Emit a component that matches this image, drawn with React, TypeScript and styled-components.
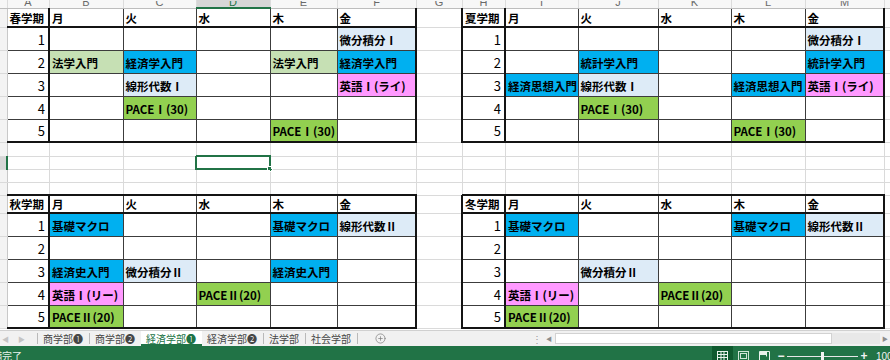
import React from "react"
import styled, { createGlobalStyle } from "styled-components"
import { CirclePlus } from "lucide-react"

const GlobalStyle = createGlobalStyle`
  html, body {
    margin: 0;
    padding: 0;
    background: #ffffff;
  }
  body {
    width: 890px;
    height: 360px;
    overflow: hidden;
    font-family: "Noto Sans CJK JP", "Noto Sans", sans-serif;
  }
`

const GREEN = "#217346"

type Fill = "blue" | "sky" | "leaf" | "lime" | "pink"
const FILL: Record<Fill, string> = {
  blue: "#00b0f0",
  sky: "#ddebf7",
  leaf: "#c6e0b4",
  lime: "#92d050",
  pink: "#ff99ff",
}

type Slot = [string, Fill] | null
interface Term {
  name: string
  slots: Slot[][]
}

const spring: Term = {
  name: "春学期",
  slots: [
    [null, null, null, null, ["微分積分Ⅰ", "sky"]],
    [["法学入門", "leaf"], ["経済学入門", "blue"], null, ["法学入門", "leaf"], ["経済学入門", "blue"]],
    [null, ["線形代数Ⅰ", "sky"], null, null, ["英語Ⅰ(ライ)", "pink"]],
    [null, ["PACEⅠ(30)", "lime"], null, null, null],
    [null, null, null, ["PACEⅠ(30)", "lime"], null],
  ],
}

const summer: Term = {
  name: "夏学期",
  slots: [
    [null, null, null, null, ["微分積分Ⅰ", "sky"]],
    [null, ["統計学入門", "blue"], null, null, ["統計学入門", "blue"]],
    [["経済思想入門", "blue"], ["線形代数Ⅰ", "sky"], null, ["経済思想入門", "blue"], ["英語Ⅰ(ライ)", "pink"]],
    [null, ["PACEⅠ(30)", "lime"], null, null, null],
    [null, null, null, ["PACEⅠ(30)", "lime"], null],
  ],
}

const autumn: Term = {
  name: "秋学期",
  slots: [
    [["基礎マクロ", "blue"], null, null, ["基礎マクロ", "blue"], ["線形代数Ⅱ", "sky"]],
    [null, null, null, null, null],
    [["経済史入門", "blue"], ["微分積分Ⅱ", "sky"], null, ["経済史入門", "blue"], null],
    [["英語Ⅰ(リー)", "pink"], null, ["PACEⅡ(20)", "lime"], null, null],
    [["PACEⅡ(20)", "lime"], null, null, null, null],
  ],
}

const winter: Term = {
  name: "冬学期",
  slots: [
    [["基礎マクロ", "blue"], null, null, ["基礎マクロ", "blue"], ["線形代数Ⅱ", "sky"]],
    [null, null, null, null, null],
    [null, ["微分積分Ⅱ", "sky"], null, null, null],
    [["英語Ⅰ(リー)", "pink"], null, ["PACEⅡ(20)", "lime"], null, null],
    [["PACEⅡ(20)", "lime"], null, null, null, null],
  ],
}

const COLS = [7, 42, 74, 73, 74, 67, 79, 46, 43, 73, 80, 73, 74, 79, 6]
const LETTERS = ["", "A", "B", "C", "D", "E", "F", "G", "H", "I", "J", "K", "L", "M", ""]
const DAYS = ["月", "火", "水", "木", "金"]
const SEL_COL = 4
const BLANK_HEIGHTS = [14, 13, 13, 13]

// 0 = sheet gridline, 1 = thin rule, 2 = thick rule
type Weight = 0 | 1 | 2
const line = (w: Weight) =>
  w === 2 ? "2px solid #141414" : w === 1 ? "1px solid #3c3c3c" : "1px solid #dadada"

const Page = styled.div`
  width: 890px;
  height: 360px;
  overflow: hidden;
  display: flex;
  flex-direction: column;
`

const Sheet = styled.table`
  width: 890px;
  border-collapse: collapse;
  table-layout: fixed;
  flex: none;
`

const Col = styled.col<{ $w: number }>`
  width: ${p => p.$w}px;
`

const Row = styled.tr<{ $h: number }>`
  height: ${p => p.$h}px;
`

const ColHead = styled.td<{ $sel?: boolean }>`
  padding: 0;
  height: 7px;
  background: ${p => (p.$sel ? "#d6d6d6" : "#f7f7f7")};
  border-right: 1px solid #dcdcdc;
  border-bottom: ${p => (p.$sel ? `2px solid ${GREEN}` : "1px solid #bdbdbd")};
  overflow: hidden;
`

const ColHeadInner = styled.div<{ $sel?: boolean }>`
  height: 6px;
  display: flex;
  align-items: flex-end;
  justify-content: center;
  overflow: hidden;
  font-family: "Liberation Sans", Arial, sans-serif;
  font-size: 11px;
  line-height: 9px;
  color: ${p => (p.$sel ? GREEN : "#6a6a6a")};
`

const RowHead = styled.td<{ $sel?: boolean }>`
  padding: 0;
  background: ${p => (p.$sel ? "#d6d6d6" : "#f3f3f3")};
  border-bottom: 1px solid #dadada;
  border-right: ${p => (p.$sel ? `2px solid ${GREEN}` : "1px solid #c8c8c8")};
`

const Cell = styled.td<{
  $t: Weight
  $r: Weight
  $b: Weight
  $l: Weight
  $fill?: string
  $kind: "head" | "num" | "text" | "blank"
  $sel?: boolean
}>`
  position: relative;
  border-top: ${p => line(p.$t)};
  border-right: ${p => line(p.$r)};
  border-bottom: ${p => line(p.$b)};
  border-left: ${p => line(p.$l)};
  background: ${p => p.$fill ?? "#ffffff"};
  padding: ${p =>
    p.$kind === "blank" ? "0" : p.$kind === "head" ? "0 2px 1px" : p.$kind === "num" ? "0 3px 3px 2px" : "0 2px 3px"};
  vertical-align: bottom;
  text-align: ${p => (p.$kind === "num" ? "right" : "left")};
  font-size: ${p => (p.$kind === "num" ? "13px" : "11.5px")};
  font-weight: ${p => (p.$kind === "num" ? 400 : 700)};
  line-height: 14px;
  color: #000000;
  white-space: nowrap;
  overflow: hidden;

  ${p =>
    p.$sel &&
    `
    border: 2px solid ${GREEN};
    overflow: visible;
    &::after {
      content: "";
      position: absolute;
      right: -4px;
      bottom: -4px;
      width: 4px;
      height: 4px;
      background: ${GREEN};
      border: 1px solid #ffffff;
    }
  `}
`

const BlankCell = () => <Cell $t={0} $r={0} $b={0} $l={0} $kind="blank" />

function termCells(term: Term, r: number, left: boolean, headTop: Weight) {
  const cells: React.ReactNode[] = []
  for (let k = 0; k < 6; k++) {
    const t: Weight = r === 0 ? headTop : 1
    const b: Weight = r === 0 || r === 5 ? 2 : 1
    const l: Weight = k === 0 ? (left ? 0 : 2) : k === 1 ? 2 : 1
    const rr: Weight = k === 0 || k === 5 ? 2 : 1
    let text = ""
    let fill: string | undefined
    let kind: "head" | "num" | "text" = "text"
    if (r === 0) {
      text = k === 0 ? term.name : DAYS[k - 1]
      kind = "head"
    } else if (k === 0) {
      text = String(r)
      kind = "num"
    } else {
      const s = term.slots[r - 1][k - 1]
      if (s) {
        text = s[0]
        fill = FILL[s[1]]
      }
    }
    cells.push(
      <Cell key={`${term.name}-${k}`} $t={t} $r={rr} $b={b} $l={l} $fill={fill} $kind={kind}>
        {text}
      </Cell>
    )
  }
  return cells
}

function TermRows({ left, right, headTop, headH }: { left: Term; right: Term; headTop: Weight; headH: number }) {
  const heights = [headH, 23, 23, 23, 23, 23]
  return (
    <>
      {heights.map((h, r) => (
        <Row key={r} $h={h}>
          <RowHead />
          {termCells(left, r, true, headTop)}
          <BlankCell />
          {termCells(right, r, false, headTop)}
          <BlankCell />
        </Row>
      ))}
    </>
  )
}

function BlankRow({ h, selected }: { h: number; selected?: boolean }) {
  return (
    <Row $h={h}>
      <RowHead $sel={selected} />
      {COLS.slice(1).map((_, i) =>
        selected && i + 1 === SEL_COL ? (
          <Cell key={i} $t={0} $r={0} $b={0} $l={0} $kind="blank" $sel />
        ) : (
          <BlankCell key={i} />
        )
      )}
    </Row>
  )
}

/* ---------- sheet tabs ---------- */

const TabBar = styled.div`
  flex: none;
  box-sizing: border-box;
  height: 16px;
  margin-top: 1px;
  display: grid;
  grid-template-columns: 530px 13px 1fr;
  background: #f1f1f1;
  border-top: 1px solid #d0d0d0;
  font-size: 10px;
  color: #444444;
`

const TabStrip = styled.div`
  display: flex;
  align-items: stretch;
`

const NavArrows = styled.div`
  width: 37px;
  display: flex;
  align-items: center;
  gap: 9px;
  padding-left: 2px;
  box-sizing: border-box;
  color: #c4c4c4;
  font-size: 7px;
`

const Sep = styled.span`
  width: 1px;
  height: 11px;
  align-self: center;
  background: #b9b9b9;
`

const Tab = styled.div<{ $active?: boolean }>`
  display: flex;
  align-items: center;
  padding: 0 6px 0 5px;
  white-space: nowrap;
  background: ${p => (p.$active ? "#ffffff" : "transparent")};
  color: ${p => (p.$active ? GREEN : "#474747")};
  box-shadow: ${p => (p.$active ? `inset 0 -2px 0 ${GREEN}` : "none")};
`

const AddSheet = styled.div`
  display: flex;
  align-items: center;
  padding-left: 17px;
  color: #7a7a7a;
`

const Kebab = styled.div`
  display: flex;
  align-items: center;
  justify-content: center;
  color: #9a9a9a;
  font-size: 10px;
`

const HScroll = styled.div`
  display: grid;
  grid-template-columns: 12px 277px 1fr 10px;
  align-items: center;
  padding: 2px 0;
`

const ScrollArrow = styled.span`
  color: #8c8c8c;
  font-size: 6px;
  text-align: center;
`

const Thumb = styled.div`
  height: 11px;
  background: #ffffff;
  border: 1px solid #d2d2d2;
  box-sizing: border-box;
`

const Track = styled.div`
  height: 11px;
  background: #e8e8e8;
`

/* ---------- status bar ---------- */

const StatusBar = styled.div`
  flex: none;
  height: 20px;
  background: ${GREEN};
  display: grid;
  grid-template-columns: 712px auto;
  align-items: center;
  color: #ffffff;
  overflow: hidden;
`

const Ready = styled.span`
  margin-left: -18px;
  font-size: 10px;
  line-height: 12px;
  color: #eaf3ed;
`

const StatusRight = styled.div`
  display: flex;
  align-items: center;
  height: 20px;
  white-space: nowrap;
`

const ViewBtn = styled.div<{ $on?: boolean }>`
  width: 21px;
  height: 20px;
  display: flex;
  align-items: center;
  justify-content: center;
  background: ${p => (p.$on ? "#0f5a2f" : "transparent")};
`

const Zoomer = styled.span`
  width: 12px;
  text-align: center;
  font-size: 12px;
  font-weight: 700;
  font-family: "Liberation Sans", Arial, sans-serif;
  color: #f2f2f2;
`

const Slider = styled.div`
  width: 71px;
  height: 9px;
  display: flex;
  align-items: center;
  justify-content: center;
  background: linear-gradient(#e6e6e6, #e6e6e6) center / 100% 1px no-repeat;
`

const Knob = styled.span`
  width: 3px;
  height: 9px;
  background: #f4f4f4;
`

const Percent = styled.span`
  margin-left: 6px;
  font-size: 10px;
  font-family: "Liberation Sans", Arial, sans-serif;
  color: #f2f2f2;
`

const NormalIcon = () => (
  <svg width="11" height="10" viewBox="0 0 11 10" fill="none" stroke="#e9f2ec" strokeWidth="1">
    <rect x="0.5" y="0.5" width="10" height="9" />
    <path d="M4 0.5v9M7 0.5v9M0.5 3.5h10M0.5 6.5h10" />
  </svg>
)

const LayoutIcon = () => (
  <svg width="11" height="10" viewBox="0 0 11 10" fill="none" stroke="#cfe3d6" strokeWidth="1">
    <rect x="0.5" y="0.5" width="10" height="9" />
    <rect x="2.5" y="2.5" width="6" height="5" />
  </svg>
)

const BreakIcon = () => (
  <svg width="11" height="10" viewBox="0 0 11 10" fill="none" stroke="#e9f2ec" strokeWidth="1">
    <path d="M0.5 9.5V0.5h10v9" />
    <rect x="1" y="1" width="6" height="3" fill="#e9f2ec" stroke="none" />
    <path d="M7.5 0.5v5" />
  </svg>
)

const TABS = ["商学部❶", "商学部❷", "経済学部❶", "経済学部❷", "法学部", "社会学部"]
const ACTIVE_TAB = 2

export default function App() {
  return (
    <Page>
      <GlobalStyle />
      <Sheet>
        <colgroup>
          {COLS.map((w, i) => (
            <Col key={i} $w={w} />
          ))}
        </colgroup>
        <tbody>
          <Row $h={7}>
            {LETTERS.map((l, i) => (
              <ColHead key={i} $sel={i === SEL_COL}>
                <ColHeadInner $sel={i === SEL_COL}>{l}</ColHeadInner>
              </ColHead>
            ))}
          </Row>
          <TermRows left={spring} right={summer} headTop={1} headH={19} />
          {BLANK_HEIGHTS.map((h, i) => (
            <BlankRow key={i} h={h} selected={i === 1} />
          ))}
          <TermRows left={autumn} right={winter} headTop={2} headH={18} />
        </tbody>
      </Sheet>

      <TabBar>
        <TabStrip>
          <NavArrows>
            <span>◀</span>
            <span>▶</span>
          </NavArrows>
          {TABS.map((name, i) => (
            <React.Fragment key={name}>
              {i !== ACTIVE_TAB && i !== ACTIVE_TAB + 1 && <Sep />}
              <Tab $active={i === ACTIVE_TAB}>{name}</Tab>
            </React.Fragment>
          ))}
          <Sep />
          <AddSheet>
            <CirclePlus size={11} strokeWidth={1.5} />
          </AddSheet>
        </TabStrip>
        <Kebab>⋮</Kebab>
        <HScroll>
          <ScrollArrow>◀</ScrollArrow>
          <Thumb />
          <Track />
          <ScrollArrow>▶</ScrollArrow>
        </HScroll>
      </TabBar>

      <StatusBar>
        <Ready>準備完了</Ready>
        <StatusRight>
          <ViewBtn $on>
            <NormalIcon />
          </ViewBtn>
          <ViewBtn>
            <LayoutIcon />
          </ViewBtn>
          <ViewBtn>
            <BreakIcon />
          </ViewBtn>
          <Zoomer>−</Zoomer>
          <Slider>
            <Knob />
          </Slider>
          <Zoomer>+</Zoomer>
          <Percent>100%</Percent>
        </StatusRight>
      </StatusBar>
    </Page>
  )
}
